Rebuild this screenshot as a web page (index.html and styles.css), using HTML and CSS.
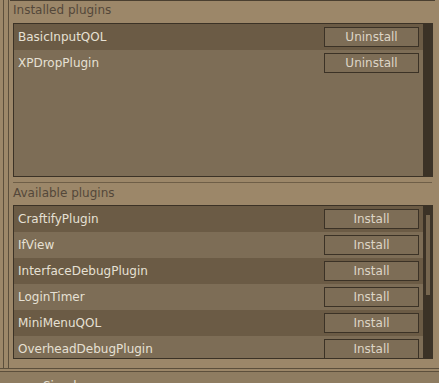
FILE: index.html
```html
<!DOCTYPE html>
<html lang="en">
<head>
  <meta charset="UTF-8" />
  <title>Plugin Hub</title>
  <link rel="stylesheet" href="styles.css">
</head>
<body>

<div class="main">
  <div class="rail">
    <div class="inner">
      <div class="panel">

        <!-- Installed -->
        <div class="section">
          <div class="label">Installed plugins</div>
          <div class="list">
            <div class="rows">
              <div class="row dark"><span>BasicInputQOL</span><button>Uninstall</button></div>
              <div class="row"><span>XPDropPlugin</span><button>Uninstall</button></div>
            </div>
            <div class="scroll"></div>
          </div>
        </div>

        <!-- Available -->
        <div class="section sep">
          <div class="label">Available plugins</div>
          <div class="list">
            <div class="rows">
              <div class="row dark"><span>CraftifyPlugin</span><button>Install</button></div>
              <div class="row"><span>IfView</span><button>Install</button></div>
              <div class="row dark"><span>InterfaceDebugPlugin</span><button>Install</button></div>
              <div class="row"><span>LoginTimer</span><button>Install</button></div>
              <div class="row dark"><span>MiniMenuQOL</span><button>Install</button></div>
              <div class="row"><span>OverheadDebugPlugin</span><button>Install</button></div>
            </div>
            <div class="scroll"><div class="thumb"></div></div>
          </div>
        </div>

      </div>
    </div>
  </div>
</div>

<div class="bottom">
  <div class="bottom-inner">
    <span class="tab">Simple</span>
  </div>
</div>

</body>
</html>
```

FILE: styles.css
```css
body {
  margin: 0;
  height: 383px;
  overflow: hidden;
  background: #9c8769;
  font-family: 'DejaVu Sans', sans-serif;
  font-size: 12px;
  color: #e6e0d4;
}
.main {
  height: 368px;
  padding-left: 3px;
  display: flex;
}
.rail {
  flex: 1;
  display: flex;
  border-left: 1px solid #5c4f3c;
  padding-left: 4px;
}
.inner {
  flex: 1;
  border-left: 1px solid #5c4f3c;
  padding-left: 1px;
  padding-right: 4px;
}
.panel {
  border-top: 1px solid #4a3f30;
  padding: 0 2px 0 3px;
}
.section.sep {
  margin-top: 5px;
  border-top: 1px solid #6e5e47;
  margin-right: 1px;
}
.label {
  height: 22px;
  line-height: 18px;
  color: #54473a;
}
.sep .label {
  line-height: 20px;
}
.list {
  display: flex;
  height: 152px;
  border: 1px solid #3b3226;
  border-right: none;
  background: #7d6d56;
}
.sep .list {
  margin-right: -1px;
}
.rows {
  flex: 1;
  overflow: hidden;
}
.row {
  height: 26px;
  display: flex;
  align-items: center;
  justify-content: space-between;
  padding: 0 4px;
}
.row.dark {
  background: #6b5b45;
}
.row button {
  width: 95px;
  height: 20px;
  box-sizing: border-box;
  border: 1px solid #3b3226;
  background: #7d6d56;
  color: #ddd5c6;
  font-family: 'DejaVu Sans', sans-serif;
  font-size: 12px;
  padding: 0;
}
.scroll {
  width: 10px;
  box-sizing: border-box;
  background: #3b3226;
  padding: 9px 3px 0 3px;
}
.thumb {
  height: 80px;
  background: #76664f;
}
.bottom {
  border-top: 1px solid #5c4f3c;
  height: 14px;
}
.bottom-inner {
  margin-top: 2px;
  border-top: 1px solid #5c4f3c;
  background: #8e7c61;
  height: 11px;
  overflow: hidden;
  padding-left: 43px;
}
.tab {
  display: block;
  line-height: 12px;
  padding-top: 8px;
  color: #e6e0d4;
}
```
